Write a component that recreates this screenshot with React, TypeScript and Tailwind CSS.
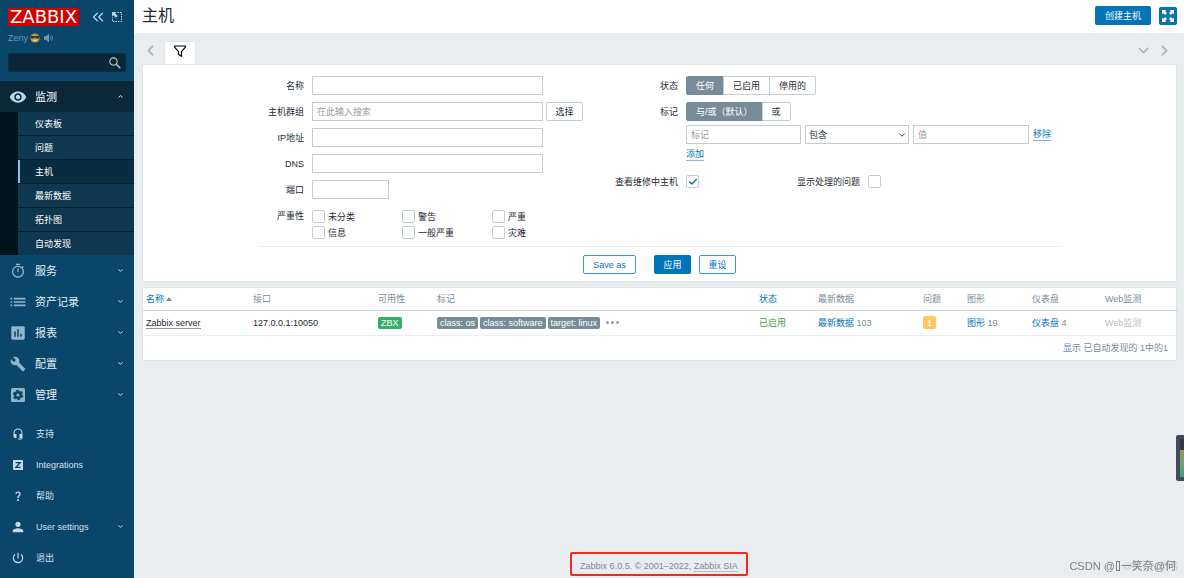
import React, { useState } from "react";
import {
  MdAssessment,
  MdBuild,
  MdHeadsetMic,
  MdList,
  MdOutlineTimer,
  MdPerson,
  MdPowerSettingsNew,
  MdQuestionMark,
  MdRemoveRedEye,
} from "react-icons/md";
import { Check, ChevronDown, ChevronLeft, ChevronRight, ChevronUp, ChevronsLeft } from "lucide-react";

const GearIcon = ({ className }: { className?: string }) => (
  <svg viewBox="0 0 18 18" className={className}>
    <rect x="2" y="2" width="14" height="14" rx="1.5" fill="currentColor" />
    <circle cx="9" cy="9" r="4" fill="#0a466a" />
    <circle cx="9" cy="9" r="4.4" fill="none" stroke="#0a466a" strokeWidth="1.6" strokeDasharray="2.6 2" />
    <circle cx="9" cy="9" r="1.6" fill="currentColor" />
  </svg>
);

const ZIcon = ({ className }: { className?: string }) => (
  <svg viewBox="0 0 14 14" className={className}>
    <rect x="2" y="2" width="10" height="10" rx="0.5" fill="currentColor" />
    <path d="M4.7 4.6h4.4L5 9.400h4.500" fill="none" stroke="#0a466a" strokeWidth="1.4" />
  </svg>
);

const SUBMENU = ["仪表板", "问题", "主机", "最新数据", "拓扑图", "自动发现"];

const MAIN_MENU = [
  { label: "服务", icon: MdOutlineTimer, size: "size-4" },
  { label: "资产记录", icon: MdList, size: "size-5" },
  { label: "报表", icon: MdAssessment, size: "size-[18px]" },
  { label: "配置", icon: MdBuild, size: "size-4" },
  { label: "管理", icon: GearIcon, size: "size-[18px]" },
];

const USER_MENU = [
  { label: "支持", icon: MdHeadsetMic, size: "size-3" },
  { label: "Integrations", icon: ZIcon, size: "size-3.5" },
  { label: "帮助", icon: MdQuestionMark, size: "size-3" },
  { label: "User settings", icon: MdPerson, size: "size-4", expandable: true },
  { label: "退出", icon: MdPowerSettingsNew, size: "size-3.5" },
];

const SEVERITIES = ["未分类", "警告", "严重", "信息", "一般严重", "灾难"];

const Sidebar = () => {
  return (
    <aside className="flex w-[134px] shrink-0 flex-col bg-[#0a466a] text-white">
      <div className="flex h-[81px] flex-col px-2 pt-2">
        <div className="flex items-center">
          <a
            href="#"
            className="flex h-[18px] w-[71px] items-center justify-center bg-[#d40000] font-['DejaVu_Sans',sans-serif] text-[18px] leading-[18px]"
          >
            ZABBIX
          </a>
          <button aria-label="Collapse" className="ml-2.5 text-[#b9d3e2]">
            <ChevronsLeft size={18} strokeWidth={1.7} />
          </button>
          <button aria-label="Hide" className="ml-1 text-[#b9d3e2]">
            <svg viewBox="0 0 12 12" className="size-3" fill="none" stroke="currentColor">
              <path d="M6.5 1.5h4v9h-9v-4" strokeDasharray="1.5 1" />
              <path d="M1 1h4.5L4.2 2.3l2.6 2.6-1.9 1.9-2.6-2.6L1 5.5z" fill="currentColor" stroke="none" />
            </svg>
          </button>
        </div>
        <div className="mt-1.5 flex h-3 items-center gap-0.5 text-[#6f98af]">
          <span>Zeny</span>
          <svg viewBox="0 0 12 12" className="size-2.5">
            <circle cx="6" cy="6" r="5.5" fill="#c09a45" />
            <path d="M.5 3.5h11L10.6 6.5H7.2L6 4.8 4.8 6.5H1.4z" fill="#2b3b3c" />
            <path d="M3 8c1.500 2 4.500 2 6 0z" fill="#f0e3b5" />
          </svg>
          <svg viewBox="0 0 12 12" className="ml-0.5 size-2.5" fill="none" stroke="#4f9bad">
            <path d="M0 4h2.500L6 1v10L2.500 8H0z" fill="#7d95a1" stroke="none" />
            <path d="M7.500 4q1.500 2 0 4M9 2.500q3 3.500 0 7" />
          </svg>
        </div>
        <form className="mt-[9px] flex h-[19px] items-center rounded-xs border border-[#062f48] bg-[#0b2637] pr-1">
          <input aria-label="Search" className="w-full min-w-0 flex-1 bg-transparent px-1 outline-none" />
          <button type="button" aria-label="Search" className="text-[#a9c6d6]">
            <svg viewBox="0 0 12 12" className="size-3" fill="none" stroke="currentColor">
              <circle cx="4.500" cy="4.500" r="3.700" strokeWidth="1.200" />
              <path d="M7.300 7.300l4 4" strokeWidth="1.600" />
            </svg>
          </button>
        </form>
      </div>
      <nav>
        <a href="#" className="flex h-[31px] items-center bg-[#0a2838] pr-2.5 pl-[9px] text-[11px]">
          <MdRemoveRedEye size={18} className="text-[#b5d9ee]" />
          <span className="ml-2 flex-1">监测</span>
          <ChevronUp size={7} strokeWidth={3} />
        </a>
        <ul className="flex flex-col gap-px bg-[#06202f] pl-[18px] shadow-[inset_18px_0_0_#00141d]">
          {SUBMENU.map((label) => (
            <li key={label}>
              <a
                href="#"
                className={
                  label === "主机"
                    ? "flex h-[23px] items-center border-l-2 border-[#7bc4ee] bg-[#0a2c40] pl-[15px]"
                    : "flex h-[23px] items-center bg-[#0e3750] pl-[17px]"
                }
              >
                {label}
              </a>
            </li>
          ))}
        </ul>
        <ul className="text-[11px] text-[#e3edf3]">
          {MAIN_MENU.map(({ label, icon: Icon, size }) => (
            <li key={label}>
              <a href="#" className="flex h-[31px] items-center pr-2.5 pl-2">
                <span className="flex w-5 justify-center">
                  <Icon className={`${size} text-[#8fb5ca]`} />
                </span>
                <span className="ml-[7px] flex-1">{label}</span>
                <ChevronDown size={7} strokeWidth={3} />
              </a>
            </li>
          ))}
        </ul>
        <ul className="mt-2 text-[#d3e1e9]">
          {USER_MENU.map(({ label, icon: Icon, size, expandable }) => (
            <li key={label}>
              <a href="#" className="flex h-[31px] items-center pr-2.5 pl-2">
                <span className="flex w-5 justify-center">
                  <Icon className={`${size} text-[#c3d8e4]`} />
                </span>
                <span className="ml-2 flex-1">{label}</span>
                {expandable && <ChevronDown size={7} strokeWidth={3} />}
              </a>
            </li>
          ))}
        </ul>
      </nav>
    </aside>
  );
};

const INPUT = "h-[19px] border border-[#c3ced3] bg-white px-1 outline-none placeholder:text-[#9a9a9a]";

const Field = ({ id, label, children }: { id: string; label: string; children?: React.ReactNode }) => (
  <div className="flex h-[19px] items-center">
    <label htmlFor={id} className="mr-2 w-[45px] text-right whitespace-nowrap">
      {label}
    </label>
    {children ?? <input id={id} className={`${INPUT} w-[231px]`} />}
  </div>
);

const CheckBox = ({ id, defaultChecked }: { id: string; defaultChecked?: boolean }) => (
  <span className="grid size-[13px] shrink-0 place-items-center">
    <input
      id={id}
      type="checkbox"
      defaultChecked={defaultChecked}
      className="peer col-start-1 row-start-1 size-[13px] appearance-none rounded-xs border border-[#c3ced3] bg-white"
    />
    <Check
      size={10}
      strokeWidth={3.5}
      className="pointer-events-none col-start-1 row-start-1 hidden text-[#0275b8] peer-checked:block"
    />
  </span>
);

const Segmented = ({ name, options }: { name: string; options: string[] }) => {
  const [value, setValue] = useState(options[0]);

  return (
    <div role="radiogroup" aria-label={name} className="flex h-[19px]">
      {options.map((option) => (
        <label
          key={option}
          className="relative -ml-px flex items-center border border-[#c3ced3] px-[9px] whitespace-nowrap first:ml-0 first:rounded-l-xs last:rounded-r-xs has-checked:border-[#768d99] has-checked:bg-[#768d99] has-checked:text-white"
        >
          <input
            type="radio"
            name={name}
            checked={value === option}
            onChange={() => setValue(option)}
            className="sr-only"
          />
          {option}
        </label>
      ))}
    </div>
  );
};

const LINK = "border-b border-[#7fbbdc] text-[#0275b8]";

const Filter = () => {
  return (
    <form
      onSubmit={(e) => e.preventDefault()}
      className="border border-[#dfe4e7] bg-white pt-[11px] pb-[7px]"
    >
      <div className="mx-auto w-[801px] max-w-full">
        <div className="flex">
          <div className="flex w-[324px] shrink-0 flex-col gap-[7px]">
            <Field id="name" label="名称" />
            <Field id="groups" label="主机群组">
              <input id="groups" placeholder="在此输入搜索" className={`${INPUT} w-[231px]`} />
              <button type="button" className="ml-[3px] h-[19px] w-[37px] shrink-0 rounded-xs border border-[#c3ced3]">
                选择
              </button>
            </Field>
            <Field id="ip" label="IP地址" />
            <Field id="dns" label="DNS" />
            <Field id="port" label="端口">
              <input id="port" className={`${INPUT} w-[77px]`} />
            </Field>
            <fieldset className="mt-1 flex">
              <legend className="float-left mr-2 w-[45px] text-right">严重性</legend>
              <div className="grid grid-cols-[90px_90px_60px] gap-y-[3px]">
                {SEVERITIES.map((severity, i) => (
                  <div key={severity} className="flex items-center gap-[3px]">
                    <CheckBox id={`severity-${i}`} />
                    <label htmlFor={`severity-${i}`}>{severity}</label>
                  </div>
                ))}
              </div>
            </fieldset>
          </div>
          <div className="flex-1">
            <div className="flex items-center">
              <span className="mr-2 w-[95px] text-right">状态</span>
              <Segmented name="状态" options={["任何", "已启用", "停用的"]} />
            </div>
            <div className="mt-[7px] flex items-center">
              <span className="mr-2 w-[95px] text-right">标记</span>
              <Segmented name="标记" options={["与/或（默认）", "或"]} />
            </div>
            <div className="mt-1 ml-[103px] flex items-center gap-1">
              <input aria-label="标记" placeholder="标记" className={`${INPUT} w-[115px]`} />
              <div className="grid items-center">
                <select
                  aria-label="包含"
                  className="col-start-1 row-start-1 h-[19px] w-[104px] appearance-none border border-[#c3ced3] bg-white px-[3px]"
                >
                  <option>包含</option>
                </select>
                <ChevronDown size={10} className="pointer-events-none col-start-1 row-start-1 mr-0.5 justify-self-end" />
              </div>
              <input aria-label="值" placeholder="值" className={`${INPUT} w-[116px]`} />
              <button type="button" className={LINK}>
                移除
              </button>
            </div>
            <div className="mt-1 ml-[103px] flex">
              <button type="button" className={LINK}>
                添加
              </button>
            </div>
            <div className="mt-3.5 flex items-center gap-2">
              <label htmlFor="maintenance" className="w-[95px] text-right">
                查看维修中主机
              </label>
              <CheckBox id="maintenance" defaultChecked />
              <label htmlFor="suppressed" className="w-[153px] text-right">
                显示处理的问题
              </label>
              <CheckBox id="suppressed" />
            </div>
          </div>
        </div>
        <div className="mt-[7px] flex justify-center border-t border-[#ebeef0] pt-2">
          <button type="button" className="mr-[18px] h-[19px] w-[53px] rounded-xs border border-[#3f96ca] text-[#0275b8]">
            Save as
          </button>
          <button className="mr-2 h-[19px] w-[37px] rounded-xs bg-[#0275b8] text-white">应用</button>
          <button type="reset" className="h-[19px] w-[37px] rounded-xs border border-[#3f96ca] text-[#0275b8]">
            重设
          </button>
        </div>
      </div>
    </form>
  );
};

const COLUMNS = [
  { label: "名称", width: 107 },
  { label: "接口", width: 125 },
  { label: "可用性", width: 59 },
  { label: "标记", width: 322 },
  { label: "状态", width: 59 },
  { label: "最新数据", width: 105 },
  { label: "问题", width: 44 },
  { label: "图形", width: 65 },
  { label: "仪表盘", width: 73 },
  { label: "Web监测", width: 76 },
];

const TAGS = ["class: os", "class: software", "target: linux"];

const HostsTable = () => {
  return (
    <div className="mt-[5px] border border-[#dfe4e7] bg-white">
      <table className="w-full table-fixed text-left">
        <colgroup>
          {COLUMNS.map(({ label, width }) => (
            <col key={label} style={{ width }} />
          ))}
        </colgroup>
        <thead>
          <tr className="h-[22px] border-b border-[#c9d4da] text-[#768d99]">
            {COLUMNS.map(({ label }) => (
              <th key={label} className="px-[3px] font-normal whitespace-nowrap">
                {label === "名称" ? (
                  <a href="#" className="flex items-center gap-0.5 text-[#0275b8]">
                    名称
                    <svg viewBox="0 0 6 4" className="h-1 w-1.5">
                      <path d="M0 4l3-4 3 4z" fill="#768d99" />
                    </svg>
                  </a>
                ) : label === "状态" ? (
                  <a href="#" className="text-[#0275b8]">
                    状态
                  </a>
                ) : (
                  label
                )}
              </th>
            ))}
          </tr>
        </thead>
        <tbody>
          <tr className="h-[25px] border-b border-[#ebeef0] text-[#768d99] *:px-[3px] *:whitespace-nowrap">
            <td>
              <a href="#" className="border-b border-[#8f979c] text-[#1f2c33]">
                Zabbix server
              </a>
            </td>
            <td className="text-[#1f2c33]">127.0.0.1:10050</td>
            <td>
              <span className="inline-block h-3 rounded-xs bg-[#34af67] px-[3px] text-white">ZBX</span>
            </td>
            <td>
              <div className="flex items-center gap-0.5">
                {TAGS.map((tag) => (
                  <button key={tag} className="h-3 rounded-xs bg-[#768d99] px-[3px] text-white">
                    {tag}
                  </button>
                ))}
                <button aria-label="More tags" className="ml-1 flex gap-0.5">
                  <i className="size-[3px] rounded-full bg-[#8ea2ac]" />
                  <i className="size-[3px] rounded-full bg-[#8ea2ac]" />
                  <i className="size-[3px] rounded-full bg-[#8ea2ac]" />
                </button>
              </div>
            </td>
            <td>
              <a href="#" className="text-[#429e47]">
                已启用
              </a>
            </td>
            <td>
              <a href="#" className="text-[#0275b8]">
                最新数据
              </a>{" "}
              103
            </td>
            <td>
              <a href="#" className="flex h-[13px] w-[13px] items-center justify-center rounded-xs bg-[#ffc859] text-white">
                1
              </a>
            </td>
            <td>
              <a href="#" className="text-[#0275b8]">
                图形
              </a>{" "}
              19
            </td>
            <td>
              <a href="#" className="text-[#0275b8]">
                仪表盘
              </a>{" "}
              4
            </td>
            <td className="text-[#bcc1c4]">Web监测</td>
          </tr>
        </tbody>
      </table>
      <div className="flex h-6 items-center justify-end pr-2 text-[#768d99]">显示 已自动发现的 1中的1</div>
    </div>
  );
};

const App = () => {
  return (
    <div className="flex min-h-screen bg-[#e9edf0] font-['Liberation_Sans','Noto_Sans_CJK_SC',sans-serif] text-[9px] leading-3 text-[#1f2c33]">
      <Sidebar />
      <main className="flex min-w-0 flex-1 flex-col">
        <header className="flex h-[33px] items-center bg-white pr-[7px] pb-0.5 pl-2">
          <h1 className="flex-1 text-[16px] leading-5">主机</h1>
          <button className="h-[19px] w-14 rounded-xs bg-[#0275b8] text-white">创建主机</button>
          <button
            aria-label="Kiosk mode"
            className="ml-2 flex size-[18px] items-center justify-center rounded-xs bg-[#0275b8] text-white"
          >
            <svg viewBox="0 0 12 12" className="size-3" fill="currentColor">
              <path d="M0 0h4.500L3.200 1.300 5 3.100 3.100 5 1.300 3.200 0 4.500z" />
              <path d="M12 0v4.500l-1.300-1.300L8.900 5 7 3.100l1.800-1.800L7.500 0z" />
              <path d="M0 12V7.500l1.300 1.300L3.100 7 5 8.900l-1.800 1.800L4.500 12z" />
              <path d="M12 12H7.500l1.300-1.300L7 8.900 8.900 7l1.800 1.800L12 7.500z" />
            </svg>
          </button>
        </header>
        <div className="flex-1 pr-[7px] pl-2">
          <div className="flex items-end pt-2 text-[#acb9c0]">
            <button aria-label="Previous" className="flex h-[23px] w-[22px] items-center pb-1">
              <ChevronLeft size={17} strokeWidth={2.5} />
            </button>
            <button
              aria-label="Filter"
              className="flex h-[23px] w-8 items-center justify-center border border-b-0 border-[#dfe4e7] bg-white pb-1 text-black"
            >
              <svg viewBox="0 0 12 12" className="size-3" fill="none" stroke="currentColor" strokeWidth="1.200">
                <path d="M.7 1h10.600v1.300L7.500 6.500v4.800l-3-1.800v-3L.7 2.300z" />
              </svg>
            </button>
            <div className="flex h-[23px] flex-1 items-center justify-end gap-1 pr-1 pb-1">
              <button aria-label="Tabs list">
                <ChevronDown size={17} strokeWidth={2.5} />
              </button>
              <button aria-label="Next">
                <ChevronRight size={17} strokeWidth={2.5} />
              </button>
            </div>
          </div>
          <Filter />
          <HostsTable />
        </div>
        <footer className="flex justify-center pb-0.5 text-[#768d99]">
          <p className="rounded-xs border-2 border-[#f5281d] px-2 pt-1.5 pb-0.5">
            Zabbix 6.0.5. © 2001–2022,{" "}
            <a href="#" className="border-b border-[#b3c0c7]">
              Zabbix SIA
            </a>
          </p>
        </footer>
      </main>
      <div className="fixed top-[435px] right-0 flex h-[46px] w-2 justify-end rounded-l-xs bg-[#454a5b] py-1">
        <div className="w-1 bg-linear-to-b from-[#33374a] from-30% via-[#9a9a52] via-30% to-[#36a18b]" />
      </div>
      <div className="pointer-events-none fixed right-[5px] bottom-1 text-[9px] leading-4 text-[#c9cdd0]">@51CTO博客</div>
      <div className="pointer-events-none fixed right-2 bottom-1 flex items-center text-[11px] leading-4 text-[#7d8184]">
        CSDN @<i className="mx-px h-2.5 w-1 border border-[#7d8184]" />
        一笑奈@何
      </div>
    </div>
  );
};

export default App;
